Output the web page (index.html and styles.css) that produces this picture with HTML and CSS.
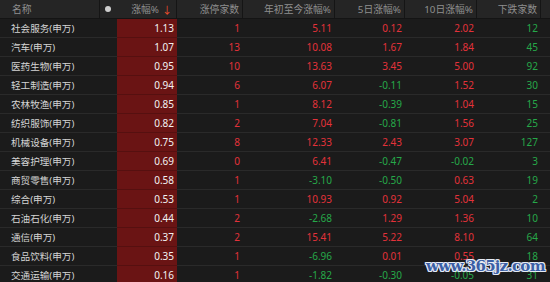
FILE: index.html
```html
<!DOCTYPE html>
<html lang="zh">
<head>
<meta charset="utf-8">
<link rel="stylesheet" href="styles.css">
</head>
<body>
<div class="board">
  <div class="row head">
    <div class="c name">名称</div>
    <div class="c dotc"><span class="dot"></span></div>
    <div class="c num sorted">涨幅%<span class="arrow">↓</span></div>
    <div class="c num">涨停家数</div>
    <div class="c num">年初至今涨幅%</div>
    <div class="c num">5日涨幅%</div>
    <div class="c num">10日涨幅%</div>
    <div class="c num">下跌家数</div>
    <div class="c pad"></div>
  </div>
  <div class="row"><div class="c name">社会服务(申万)</div><div class="c"></div><div class="c num chg">1.13</div><div class="c num up">1</div><div class="c num up">5.11</div><div class="c num up">0.12</div><div class="c num up">2.02</div><div class="c num dn">12</div><div class="c"></div></div>
  <div class="row"><div class="c name">汽车(申万)</div><div class="c"></div><div class="c num chg">1.07</div><div class="c num up">13</div><div class="c num up">10.08</div><div class="c num up">1.67</div><div class="c num up">1.84</div><div class="c num dn">45</div><div class="c"></div></div>
  <div class="row"><div class="c name">医药生物(申万)</div><div class="c"></div><div class="c num chg">0.95</div><div class="c num up">10</div><div class="c num up">13.63</div><div class="c num up">3.45</div><div class="c num up">5.00</div><div class="c num dn">92</div><div class="c"></div></div>
  <div class="row"><div class="c name">轻工制造(申万)</div><div class="c"></div><div class="c num chg">0.94</div><div class="c num up">6</div><div class="c num up">6.07</div><div class="c num dn">-0.11</div><div class="c num up">1.52</div><div class="c num dn">30</div><div class="c"></div></div>
  <div class="row"><div class="c name">农林牧渔(申万)</div><div class="c"></div><div class="c num chg">0.85</div><div class="c num up">1</div><div class="c num up">8.12</div><div class="c num dn">-0.39</div><div class="c num up">1.04</div><div class="c num dn">15</div><div class="c"></div></div>
  <div class="row"><div class="c name">纺织服饰(申万)</div><div class="c"></div><div class="c num chg">0.82</div><div class="c num up">2</div><div class="c num up">7.04</div><div class="c num dn">-0.81</div><div class="c num up">1.56</div><div class="c num dn">25</div><div class="c"></div></div>
  <div class="row"><div class="c name">机械设备(申万)</div><div class="c"></div><div class="c num chg">0.75</div><div class="c num up">8</div><div class="c num up">12.33</div><div class="c num up">2.43</div><div class="c num up">3.07</div><div class="c num dn">127</div><div class="c"></div></div>
  <div class="row"><div class="c name">美容护理(申万)</div><div class="c"></div><div class="c num chg">0.69</div><div class="c num up">0</div><div class="c num up">6.41</div><div class="c num dn">-0.47</div><div class="c num dn">-0.02</div><div class="c num dn">3</div><div class="c"></div></div>
  <div class="row"><div class="c name">商贸零售(申万)</div><div class="c"></div><div class="c num chg">0.58</div><div class="c num up">1</div><div class="c num dn">-3.10</div><div class="c num dn">-0.50</div><div class="c num up">0.63</div><div class="c num dn">19</div><div class="c"></div></div>
  <div class="row"><div class="c name">综合(申万)</div><div class="c"></div><div class="c num chg">0.53</div><div class="c num up">1</div><div class="c num up">10.93</div><div class="c num up">0.92</div><div class="c num up">5.04</div><div class="c num dn">2</div><div class="c"></div></div>
  <div class="row"><div class="c name">石油石化(申万)</div><div class="c"></div><div class="c num chg">0.44</div><div class="c num up">2</div><div class="c num dn">-2.68</div><div class="c num up">1.29</div><div class="c num up">1.36</div><div class="c num dn">10</div><div class="c"></div></div>
  <div class="row"><div class="c name">通信(申万)</div><div class="c"></div><div class="c num chg">0.37</div><div class="c num up">2</div><div class="c num up">15.41</div><div class="c num up">5.22</div><div class="c num up">8.10</div><div class="c num dn">64</div><div class="c"></div></div>
  <div class="row"><div class="c name">食品饮料(申万)</div><div class="c"></div><div class="c num chg">0.35</div><div class="c num up">1</div><div class="c num dn">-6.96</div><div class="c num up">0.01</div><div class="c num up">0.55</div><div class="c num dn">18</div><div class="c"></div></div>
  <div class="row"><div class="c name">交通运输(申万)</div><div class="c"></div><div class="c num chg">0.16</div><div class="c num up">1</div><div class="c num dn">-1.82</div><div class="c num dn">-0.30</div><div class="c num dn">-0.05</div><div class="c num dn">31</div><div class="c"></div></div>
  <div class="watermark">www.365jz.com</div>
</div>
</body>
</html>
```
FILE: styles.css
```css
html, body {
  margin: 0;
  padding: 0;
  background: #1b1b1b;
  overflow: hidden;
}
.board {
  position: relative;
  width: 550px;
  height: 282px;
  overflow: hidden;
  font-family: "Noto Sans", "Noto Sans CJK SC", sans-serif;
  font-size: 10px;
  color: #d6d6d6;
}
.row {
  display: grid;
  grid-template-columns: 100px 17px 60px 66px 92px 70px 72px 64px 9px;
  height: 18px;
  border-bottom: 1px solid #2a2a2a;
}
.c {
  display: flex;
  align-items: center;
  height: 18px;
  white-space: nowrap;
  box-sizing: border-box;
}
.name {
  padding-left: 11px;
  font-size: 9.6px;
  color: #d4d4d4;
}
.num {
  justify-content: flex-end;
  padding-right: 3px;
}
.head {
  background: #252525;
  border-bottom: 1px solid #141414;
  color: #8f8f8f;
}
.head .c {
  border-right: 1px solid #151515;
  font-size: 9.8px;
  color: #8f8f8f;
}
.head .name {
  padding-left: 12px;
  border-right: 1px solid #151515;
}
.head .dotc {
  border-right: none;
  justify-content: flex-start;
  padding-left: 5px;
}
.head .pad {
  border-right: none;
}
.dot {
  width: 6px;
  height: 6px;
  border-radius: 50%;
  background: #cfcfcf;
}
.arrow {
  color: #f0502d;
  margin-left: 3px;
  font-size: 10px;
}
.head .sorted {
  padding-right: 4px;
}
.chg {
  background: #6a1414;
  color: #f2f2f2;
  height: 19px;
  border-bottom: 1px solid #561010;
}
.up {
  color: #e3323a;
}
.dn {
  color: #26a849;
}
.watermark {
  position: absolute;
  left: 426px;
  top: 257px;
  font-family: "DejaVu Serif", serif;
  font-weight: bold;
  font-size: 15px;
  letter-spacing: -0.7px;
  color: #3b5fa6;
  text-shadow: 1px 0 0 #e8ecf4, -1px 0 0 #e8ecf4, 0 1px 0 #e8ecf4, 0 -1px 0 #e8ecf4, 1px 1px 0 #c9d3e6, -1px -1px 0 #c9d3e6, 1px -1px 0 #c9d3e6, -1px 1px 0 #c9d3e6;
}
```
